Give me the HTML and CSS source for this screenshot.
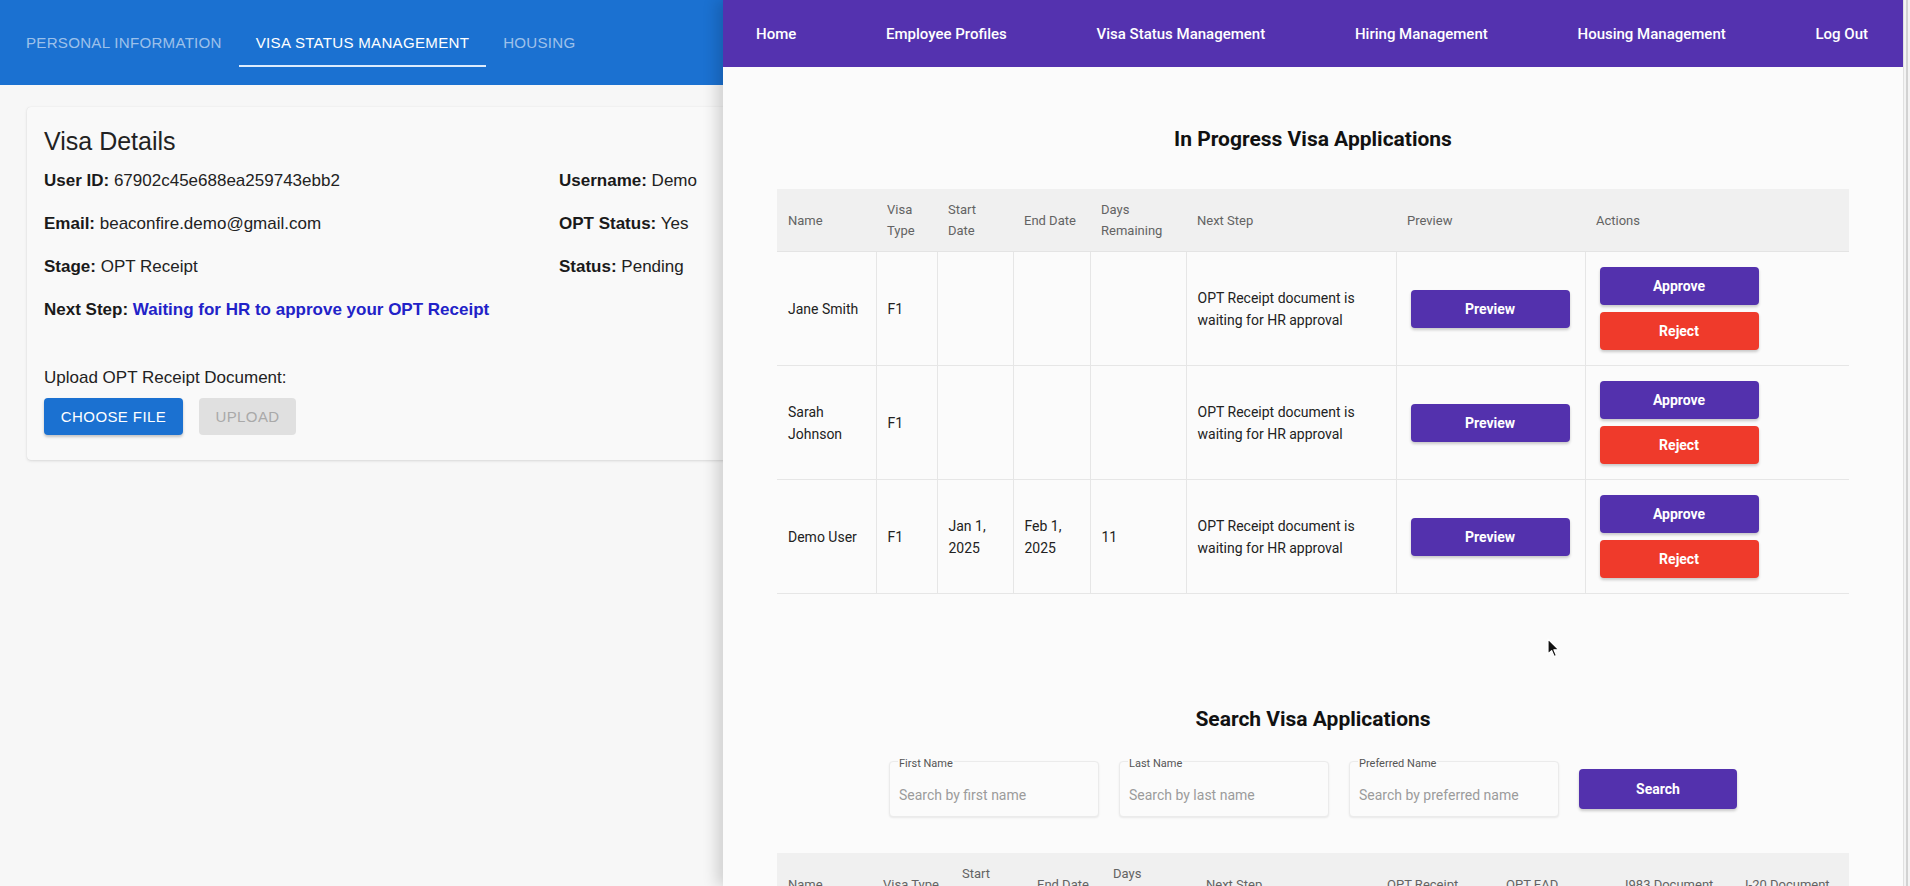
FILE: index.html
```html
<!DOCTYPE html>
<html lang="en">
<head>
<meta charset="utf-8">
<title>Visa Status Management</title>
<link rel="stylesheet" href="styles.css">
</head>
<body>
<div class="screen">
  <section class="left-app">
    <header class="tabs-bar">
      <nav class="tabs">
        <span class="tab">Personal Information</span>
        <span class="tab active">Visa Status Management</span>
        <span class="tab">Housing</span>
      </nav>
    </header>
    <main class="left-main">
      <div class="card">
        <h2 class="card-title">Visa Details</h2>
        <div class="details">
          <p><b>User ID:</b> 67902c45e688ea259743ebb2</p>
          <p><b>Username:</b> Demo</p>
          <p><b>Email:</b> beaconfire.demo@gmail.com</p>
          <p><b>OPT Status:</b> Yes</p>
          <p><b>Stage:</b> OPT Receipt</p>
          <p><b>Status:</b> Pending</p>
          <p class="full"><b>Next Step:</b> <span class="next">Waiting for HR to approve your OPT Receipt</span></p>
        </div>
        <p class="upload-label">Upload OPT Receipt Document:</p>
        <div class="upload-actions">
          <button class="btn-choose" type="button">Choose File</button>
          <button class="btn-upload" type="button" disabled>Upload</button>
        </div>
      </div>
    </main>
  </section>

  <section class="right-win">
    <div class="win-content">
      <nav class="topnav">
        <span>Home</span>
        <span>Employee Profiles</span>
        <span>Visa Status Management</span>
        <span>Hiring Management</span>
        <span>Housing Management</span>
        <span>Log Out</span>
      </nav>

      <h2 class="section-title">In Progress Visa Applications</h2>
      <table class="apps">
        <colgroup>
          <col class="a1"><col class="a2"><col class="a3"><col class="a4"><col class="a5"><col class="a6"><col class="a7"><col class="a8">
        </colgroup>
        <thead>
          <tr><th>Name</th><th>Visa Type</th><th>Start Date</th><th>End Date</th><th>Days Remaining</th><th>Next Step</th><th>Preview</th><th>Actions</th></tr>
        </thead>
        <tbody>
          <tr>
            <td>Jane Smith</td><td>F1</td><td></td><td></td><td></td>
            <td>OPT Receipt document is waiting for HR approval</td>
            <td class="btn-cell"><button class="btn btn-purple" type="button">Preview</button></td>
            <td class="btn-cell"><div class="actions"><button class="btn btn-purple" type="button">Approve</button><button class="btn btn-red" type="button">Reject</button></div></td>
          </tr>
          <tr>
            <td>Sarah Johnson</td><td>F1</td><td></td><td></td><td></td>
            <td>OPT Receipt document is waiting for HR approval</td>
            <td class="btn-cell"><button class="btn btn-purple" type="button">Preview</button></td>
            <td class="btn-cell"><div class="actions"><button class="btn btn-purple" type="button">Approve</button><button class="btn btn-red" type="button">Reject</button></div></td>
          </tr>
          <tr>
            <td>Demo User</td><td>F1</td><td>Jan 1, 2025</td><td>Feb 1, 2025</td><td>11</td>
            <td>OPT Receipt document is waiting for HR approval</td>
            <td class="btn-cell"><button class="btn btn-purple" type="button">Preview</button></td>
            <td class="btn-cell"><div class="actions"><button class="btn btn-purple" type="button">Approve</button><button class="btn btn-red" type="button">Reject</button></div></td>
          </tr>
        </tbody>
      </table>

      <h2 class="section-title search-title">Search Visa Applications</h2>
      <form class="search-row">
        <label class="field"><span class="field-label">First Name</span><input type="text" placeholder="Search by first name"></label>
        <label class="field"><span class="field-label">Last Name</span><input type="text" placeholder="Search by last name"></label>
        <label class="field"><span class="field-label">Preferred Name</span><input type="text" placeholder="Search by preferred name"></label>
        <button class="btn btn-purple btn-search" type="button">Search</button>
      </form>

      <table class="apps results">
        <colgroup>
          <col class="b1"><col class="b2"><col class="b3"><col class="b4"><col class="b5"><col class="b6"><col class="b7"><col class="b8"><col class="b9"><col class="b10">
        </colgroup>
        <thead>
          <tr><th>Name</th><th>Visa Type</th><th>Start Date</th><th>End Date</th><th>Days Remaining</th><th>Next Step</th><th>OPT Receipt</th><th>OPT EAD</th><th>I983 Document</th><th>I-20 Document</th></tr>
        </thead>
      </table>
    </div>
    <div class="scrollbar"><div class="thumb"></div></div>
    <svg class="cursor" width="13" height="20" viewBox="0 0 13 20" aria-hidden="true">
      <path d="M1 1 L1 16 L4.6 12.6 L7.2 18.6 L9.4 17.6 L6.9 11.8 L11.8 11.8 Z" fill="#111" stroke="#fff" stroke-width="1.2" stroke-linejoin="round"/>
    </svg>
  </section>
</div>
</body>
</html>
```

FILE: styles.css
```css
* { box-sizing: border-box; }

html, body {
  margin: 0;
  padding: 0;
  width: 100%;
  height: 100%;
  overflow: hidden;
}

body {
  background: #f7f7f7;
  font-family: "Liberation Sans", Arial, sans-serif;
  color: #1f1f1f;
}

.screen {
  display: flex;
  width: 1910px;
  height: 886px;
}

/* ---------- Left app ---------- */
.left-app {
  flex: none;
  width: 723px;
  height: 886px;
  overflow: hidden;
  background: #f7f7f7;
}

.tabs-bar {
  height: 85px;
  background: #1b71d1;
  padding-top: 17px;
  width: 900px;
}

.tabs {
  display: flex;
  padding-left: 9px;
}

.tab {
  height: 50px;
  display: flex;
  align-items: center;
  padding: 0 17px;
  font-size: 15.1px;
  letter-spacing: 0.27px;
  text-transform: uppercase;
  color: rgba(255, 255, 255, 0.58);
}

.tab.active {
  color: #ffffff;
  box-shadow: inset 0 -2px 0 rgba(232, 242, 255, 0.95);
}

.left-main {
  padding: 22px 0 0 27px;
}

.card {
  width: 820px;
  background: #f9f9f9;
  border-radius: 4px;
  box-shadow: 0 1px 3px rgba(0, 0, 0, 0.12), 0 0 1px rgba(0, 0, 0, 0.1);
  padding: 18px 17px 25px;
}

.card-title {
  margin: 0 0 12px;
  font-size: 25px;
  line-height: 32px;
  font-weight: 400;
  color: #222;
}

.details {
  display: grid;
  grid-template-columns: 515px 1fr;
  row-gap: 19px;
}

.details p {
  margin: 0;
  font-size: 17px;
  line-height: 24px;
  color: #222;
}

.details b { font-weight: 700; color: #1a1a1a; }

.details .full { grid-column: 1 / -1; }

.details .next {
  color: #2222c8;
  font-weight: 700;
}

.upload-label {
  margin: 44px 0 0;
  font-size: 17px;
  line-height: 24px;
  color: #222;
}

.upload-actions {
  display: flex;
  gap: 16px;
  margin-top: 8px;
}

.btn-choose,
.btn-upload {
  height: 37px;
  border: none;
  border-radius: 4px;
  font-family: "Liberation Sans", Arial, sans-serif;
  font-size: 15px;
  letter-spacing: 0.4px;
  text-transform: uppercase;
}

.btn-choose {
  width: 139px;
  background: #1b71d1;
  color: #fff;
  box-shadow: 0 2px 3px rgba(0, 0, 0, 0.22);
}

.btn-upload {
  width: 97px;
  background: #e0e0e0;
  color: #a9a9a9;
}

/* ---------- Right window ---------- */
.right-win {
  position: relative;
  flex: 1;
  display: flex;
  height: 886px;
  overflow: hidden;
  background: #fbfbfb;
  box-shadow: -6px 0 14px rgba(0, 0, 0, 0.16);
  font-family: Roboto, "Liberation Sans", Arial, sans-serif;
  color: #222;
}

.win-content {
  flex: 1;
  min-width: 0;
}

.topnav {
  height: 67px;
  background: #5432af;
  display: flex;
  align-items: center;
  justify-content: space-between;
  padding: 0 35px 0 33px;
  color: #fff;
  font-size: 15px;
  font-weight: 500;
}

.section-title {
  margin: 58px 0 36px;
  text-align: center;
  font-size: 21px;
  line-height: 28px;
  font-weight: 700;
  color: #111;
}

.search-title {
  margin: 111px 0 28px;
}

.apps {
  width: 1072px;
  margin: 0 auto;
  table-layout: fixed;
  border-collapse: collapse;
}

.apps th {
  background: #f0f0f0;
  padding: 10px 11px;
  text-align: left;
  vertical-align: middle;
  font-size: 13px;
  line-height: 21px;
  font-weight: 400;
  color: #636363;
  border-bottom: 1px solid #e4e4e4;
}

.apps td {
  padding: 15px 11px;
  vertical-align: middle;
  font-size: 14px;
  line-height: 22px;
  color: #222;
  border-bottom: 1px solid #e6e6e6;
  border-right: 1px solid #e6e6e6;
}

.apps td:last-child { border-right: none; }

.apps td.btn-cell { padding-left: 14px; }

.a1 { width: 99px; }
.a2 { width: 61px; }
.a3 { width: 76px; }
.a4 { width: 77px; }
.a5 { width: 96px; }
.a6 { width: 210px; }
.a7 { width: 189px; }
.a8 { width: 264px; }

.b1 { width: 95px; }
.b2 { width: 79px; }
.b3 { width: 75px; }
.b4 { width: 76px; }
.b5 { width: 93px; }
.b6 { width: 181px; }
.b7 { width: 119px; }
.b8 { width: 119px; }
.b9 { width: 120px; }
.b10 { width: 115px; }

.btn {
  display: block;
  width: 159px;
  height: 38px;
  border: none;
  border-radius: 4px;
  font-family: Roboto, "Liberation Sans", Arial, sans-serif;
  font-size: 14px;
  font-weight: 700;
  color: #fff;
  box-shadow: 0 2px 3px rgba(0, 0, 0, 0.2);
}

.btn-purple { background: #5331ad; }
.btn-red { background: #ef3a2b; }

.actions {
  display: flex;
  flex-direction: column;
  gap: 7px;
}

.search-row {
  display: flex;
  justify-content: center;
  align-items: center;
  gap: 20px;
  margin: 0 0 36px;
}

.field {
  position: relative;
  display: block;
  width: 210px;
  height: 56px;
  border: 1px solid #ebebeb;
  border-radius: 4px;
  background: #fbfbfb;
  box-shadow: 0 1px 2px rgba(0, 0, 0, 0.08);
}

.field-label {
  position: absolute;
  top: -5px;
  left: 8px;
  padding: 0 1px;
  background: #fbfbfb;
  font-size: 11px;
  line-height: 13px;
  color: #555;
}

.field input {
  display: block;
  width: 100%;
  height: 18px;
  margin-top: 24px;
  padding: 0 9px;
  border: none;
  outline: none;
  background: transparent;
  font-family: Roboto, "Liberation Sans", Arial, sans-serif;
  font-size: 14px;
  line-height: 18px;
  color: #222;
}

.field input::placeholder { color: #9b9b9b; }

.btn-search {
  width: 158px;
  height: 40px;
}

.scrollbar {
  flex: none;
  width: 7px;
  height: 886px;
  background: #f3f3f3;
  border-left: 1px solid #e0e0e0;
  position: relative;
}

.thumb {
  position: absolute;
  top: 0;
  left: 2px;
  width: 2px;
  height: 886px;
  background: #d2d2d2;
}

.cursor {
  position: absolute;
  left: 824px;
  top: 638px;
}
```
